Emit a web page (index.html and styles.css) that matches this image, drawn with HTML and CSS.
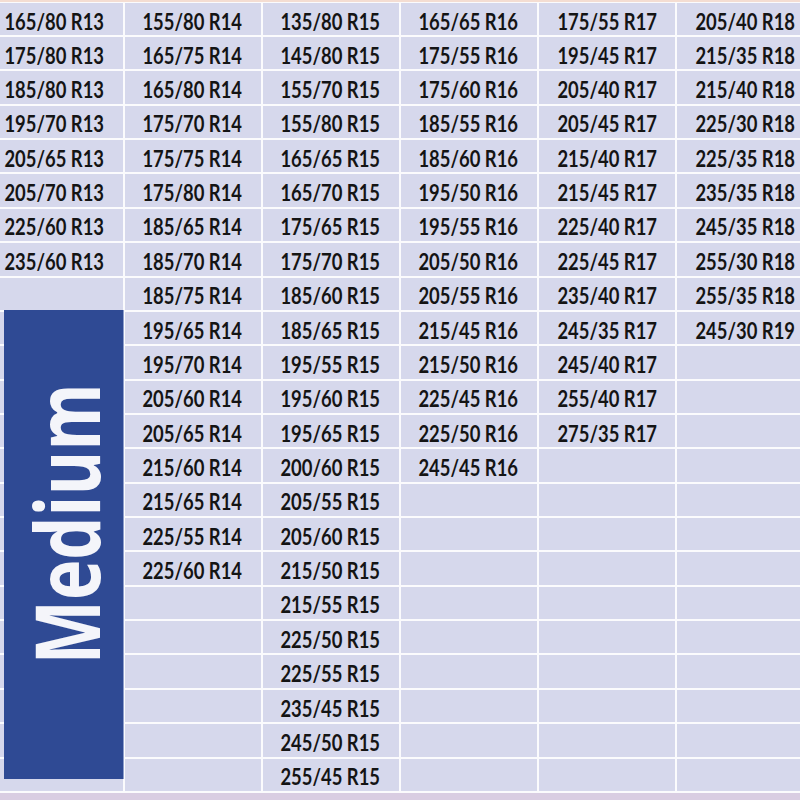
FILE: index.html
```html
<!DOCTYPE html>
<html>
<head>
<meta charset="utf-8">
<link rel="stylesheet" href="styles.css">
</head>
<body>
<div class="sheet">
  <div class="topstrip"></div>
  <div class="grid">
    <div class="c"><span>165/80 R13</span></div>
    <div class="c"><span>175/80 R13</span></div>
    <div class="c"><span>185/80 R13</span></div>
    <div class="c"><span>195/70 R13</span></div>
    <div class="c"><span>205/65 R13</span></div>
    <div class="c"><span>205/70 R13</span></div>
    <div class="c"><span>225/60 R13</span></div>
    <div class="c"><span>235/60 R13</span></div>
    <div class="c"></div><div class="c"></div><div class="c"></div><div class="c"></div><div class="c"></div>
    <div class="c"></div><div class="c"></div><div class="c"></div><div class="c"></div><div class="c"></div>
    <div class="c"></div><div class="c"></div><div class="c"></div><div class="c"></div><div class="c"></div>

    <div class="c"><span>155/80 R14</span></div>
    <div class="c"><span>165/75 R14</span></div>
    <div class="c"><span>165/80 R14</span></div>
    <div class="c"><span>175/70 R14</span></div>
    <div class="c"><span>175/75 R14</span></div>
    <div class="c"><span>175/80 R14</span></div>
    <div class="c"><span>185/65 R14</span></div>
    <div class="c"><span>185/70 R14</span></div>
    <div class="c"><span>185/75 R14</span></div>
    <div class="c"><span>195/65 R14</span></div>
    <div class="c"><span>195/70 R14</span></div>
    <div class="c"><span>205/60 R14</span></div>
    <div class="c"><span>205/65 R14</span></div>
    <div class="c"><span>215/60 R14</span></div>
    <div class="c"><span>215/65 R14</span></div>
    <div class="c"><span>225/55 R14</span></div>
    <div class="c"><span>225/60 R14</span></div>
    <div class="c"></div><div class="c"></div><div class="c"></div><div class="c"></div><div class="c"></div><div class="c"></div>

    <div class="c"><span>135/80 R15</span></div>
    <div class="c"><span>145/80 R15</span></div>
    <div class="c"><span>155/70 R15</span></div>
    <div class="c"><span>155/80 R15</span></div>
    <div class="c"><span>165/65 R15</span></div>
    <div class="c"><span>165/70 R15</span></div>
    <div class="c"><span>175/65 R15</span></div>
    <div class="c"><span>175/70 R15</span></div>
    <div class="c"><span>185/60 R15</span></div>
    <div class="c"><span>185/65 R15</span></div>
    <div class="c"><span>195/55 R15</span></div>
    <div class="c"><span>195/60 R15</span></div>
    <div class="c"><span>195/65 R15</span></div>
    <div class="c"><span>200/60 R15</span></div>
    <div class="c"><span>205/55 R15</span></div>
    <div class="c"><span>205/60 R15</span></div>
    <div class="c"><span>215/50 R15</span></div>
    <div class="c"><span>215/55 R15</span></div>
    <div class="c"><span>225/50 R15</span></div>
    <div class="c"><span>225/55 R15</span></div>
    <div class="c"><span>235/45 R15</span></div>
    <div class="c"><span>245/50 R15</span></div>
    <div class="c"><span>255/45 R15</span></div>

    <div class="c"><span>165/65 R16</span></div>
    <div class="c"><span>175/55 R16</span></div>
    <div class="c"><span>175/60 R16</span></div>
    <div class="c"><span>185/55 R16</span></div>
    <div class="c"><span>185/60 R16</span></div>
    <div class="c"><span>195/50 R16</span></div>
    <div class="c"><span>195/55 R16</span></div>
    <div class="c"><span>205/50 R16</span></div>
    <div class="c"><span>205/55 R16</span></div>
    <div class="c"><span>215/45 R16</span></div>
    <div class="c"><span>215/50 R16</span></div>
    <div class="c"><span>225/45 R16</span></div>
    <div class="c"><span>225/50 R16</span></div>
    <div class="c"><span>245/45 R16</span></div>
    <div class="c"></div><div class="c"></div><div class="c"></div><div class="c"></div><div class="c"></div>
    <div class="c"></div><div class="c"></div><div class="c"></div><div class="c"></div>

    <div class="c"><span>175/55 R17</span></div>
    <div class="c"><span>195/45 R17</span></div>
    <div class="c"><span>205/40 R17</span></div>
    <div class="c"><span>205/45 R17</span></div>
    <div class="c"><span>215/40 R17</span></div>
    <div class="c"><span>215/45 R17</span></div>
    <div class="c"><span>225/40 R17</span></div>
    <div class="c"><span>225/45 R17</span></div>
    <div class="c"><span>235/40 R17</span></div>
    <div class="c"><span>245/35 R17</span></div>
    <div class="c"><span>245/40 R17</span></div>
    <div class="c"><span>255/40 R17</span></div>
    <div class="c"><span>275/35 R17</span></div>
    <div class="c"></div><div class="c"></div><div class="c"></div><div class="c"></div><div class="c"></div>
    <div class="c"></div><div class="c"></div><div class="c"></div><div class="c"></div><div class="c"></div>

    <div class="c"><span>205/40 R18</span></div>
    <div class="c"><span>215/35 R18</span></div>
    <div class="c"><span>215/40 R18</span></div>
    <div class="c"><span>225/30 R18</span></div>
    <div class="c"><span>225/35 R18</span></div>
    <div class="c"><span>235/35 R18</span></div>
    <div class="c"><span>245/35 R18</span></div>
    <div class="c"><span>255/30 R18</span></div>
    <div class="c"><span>255/35 R18</span></div>
    <div class="c"><span>245/30 R19</span></div>
    <div class="c"></div><div class="c"></div><div class="c"></div><div class="c"></div><div class="c"></div>
    <div class="c"></div><div class="c"></div><div class="c"></div><div class="c"></div><div class="c"></div>
    <div class="c"></div><div class="c"></div><div class="c"></div>
  </div>
  <div class="nextrow"></div>
  <div class="medium"><span class="medium-label">Medium</span></div>
</div>
</body>
</html>
```

FILE: styles.css
```css
html, body {
  margin: 0;
  padding: 0;
  background: #ffffff;
  overflow: hidden;
}

.sheet {
  position: relative;
  width: 800px;
  height: 800px;
  overflow: hidden;
  background: #fbfbfd;
}

.topstrip {
  height: 2px;
  background: #f4ddd2;
  margin-bottom: 1px;
}

.grid {
  display: grid;
  grid-auto-flow: column;
  grid-template-rows: 32px repeat(22, 32.36px);
  grid-template-columns: repeat(6, 136.1px);
  gap: 2px;
  margin-left: -13.6px;
  width: 826.6px;
}

.c {
  background: #d6d8ec;
  display: flex;
  align-items: center;
  justify-content: center;
  font-family: Lato, "Open Sans", sans-serif;
  font-weight: 700;
  font-size: 23px;
  color: #141414;
  line-height: 1;
  padding-top: 4px;
  box-sizing: border-box;
}

.c span {
  display: inline-block;
  white-space: nowrap;
  transform: scaleX(0.8);
}

.nextrow {
  margin-top: 2px;
  height: 10px;
  background: #d9cde2;
}

.medium {
  position: absolute;
  left: 4px;
  top: 310px;
  width: 119px;
  height: 469px;
  background: #2f4a94;
  box-shadow: 1px 0 0 #8f9fcc;
  display: flex;
  align-items: center;
  justify-content: center;
  padding-bottom: 42px;
  box-sizing: border-box;
}

.medium-label {
  display: inline-block;
  writing-mode: vertical-rl;
  transform: rotate(180deg) scaleY(0.76);
  font-family: "Open Sans", "Noto Sans", sans-serif;
  font-weight: 700;
  font-size: 90px;
  line-height: 1;
  color: #f4f5fa;
  margin-left: 2px;
}
```
